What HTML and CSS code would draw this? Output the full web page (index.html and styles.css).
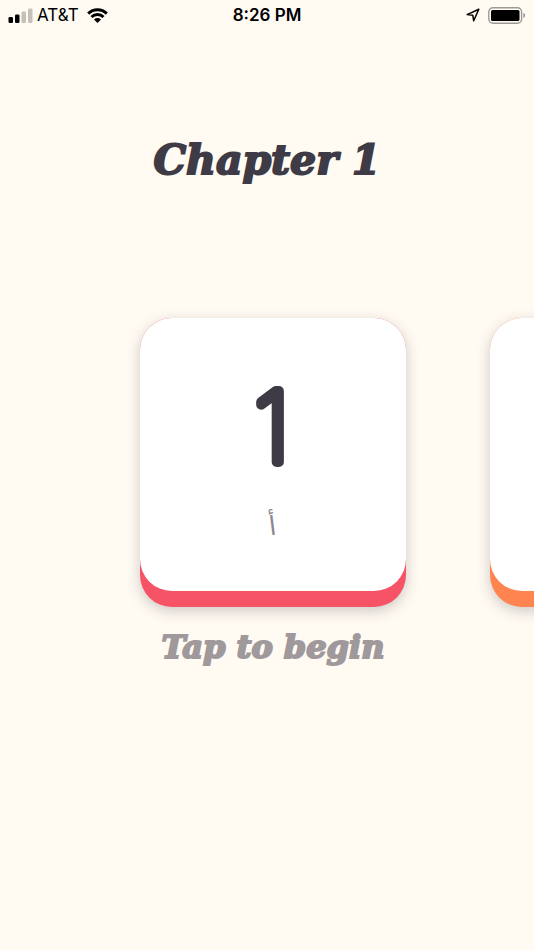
FILE: index.html
```html
<!DOCTYPE html>
<html lang="en">
<head>
    <meta charset="UTF-8">
    <meta name="viewport" content="width=device-width, initial-scale=1.0">
    <title>Chapter 1</title>
    <link rel="stylesheet" href="styles.css">
</head>
<body>
    <header class="status-bar">
        <div class="status-left">
            <svg class="signal" width="25" height="15" viewBox="0 0 25 15">
                <rect x="0.5" y="9" width="4.5" height="6" rx="1.3"/>
                <rect x="7" y="6.5" width="4.5" height="8.5" rx="1.3"/>
                <rect class="weak" x="13.5" y="3.5" width="4.5" height="11.5" rx="1.3"/>
                <rect class="weak" x="20" y="0.5" width="4.5" height="14.5" rx="1.3"/>
            </svg>
            <span class="carrier">AT&amp;T</span>
            <svg class="wifi" width="21" height="15" viewBox="0 0 21 15">
                <path d="M1.2 5.6a13.2 13.2 0 0 1 18.6 0M4.5 9a8.5 8.5 0 0 1 12 0"/>
                <path class="dot" d="M7 11.4a5 5 0 0 1 7 0L10.5 15z"/>
            </svg>
        </div>
        <time class="clock">8:26 PM</time>
        <div class="status-right">
            <svg class="location" width="14" height="14" viewBox="0 0 14 14">
                <path d="M12.8 1.2 1.2 6.6l5.6.7.9 5.5z"/>
            </svg>
            <svg class="battery" width="38" height="17" viewBox="0 0 38 17">
                <rect class="shell" x="0.8" y="0.8" width="32.8" height="15.4" rx="4.2"/>
                <rect x="3" y="3" width="28.5" height="11" rx="1.6"/>
                <path class="tip" d="M35.3 5.8c2.4.8 2.4 4.6 0 5.4z"/>
            </svg>
        </div>
    </header>

    <main>
        <h1 class="title">Chapter 1</h1>

        <div class="carousel">
            <div class="slide">
                <button class="card card-red" id="lesson1" type="button">
                    <span class="card-face">
                        <svg class="number" width="120" height="140" viewBox="0 0 120 140">
                            <text x="59" y="104">1</text>
                        </svg>
                        <span class="arabic" lang="ar">أ</span>
                    </span>
                </button>
                <label class="hint" for="lesson1">Tap to begin</label>
            </div>
            <div class="slide">
                <button class="card card-orange" type="button" aria-label="2">
                    <span class="card-face"></span>
                </button>
            </div>
        </div>
    </main>
</body>
</html>
```
FILE: styles.css
```css
* { margin: 0; padding: 0; box-sizing: border-box; }
body {
    background: #fffaf2;
    color: #3e3a46;
    font-family: Inter, "Liberation Sans", sans-serif;
    min-height: 100vh;
    overflow-x: hidden;
}

/* Status bar */
.status-bar {
    display: grid;
    grid-template-columns: 1fr auto 1fr;
    align-items: center;
    height: 30px;
    padding: 0 8px;
    color: #000;
    font-size: 17px;
    line-height: 30px;
}
.status-left, .status-right {
    display: flex;
    align-items: center;
}
.status-left {
    gap: 4px;
}
.status-right {
    justify-content: flex-end;
    gap: 8px;
}
.carrier {
    margin-right: 4px;
}
.clock {
    font-weight: 600;
}
.weak {
    fill: #c5c1ba;
}
.wifi path {
    fill: none;
    stroke: #000;
    stroke-width: 3;
}
.wifi .dot {
    fill: #000;
    stroke: none;
}
.location path {
    fill: none;
    stroke: #000;
    stroke-width: 1.5;
    stroke-linejoin: round;
}
.battery .shell {
    fill: none;
    stroke: #9d9a95;
    stroke-width: 1.4;
}
.battery .tip {
    fill: #9d9a95;
}

/* Chapter */
.title, .hint {
    font-family: "DejaVu Serif", serif;
    font-style: italic;
    font-weight: 700;
    text-align: center;
    -webkit-text-stroke: 2px currentColor;
}
.title {
    margin-top: 102px;
    font-size: 41px;
    line-height: 56px;
}
.carousel {
    display: flex;
    gap: 84px;
    margin-top: 110px;
    padding: 20px 0 20px calc(50% - 127px);
    overflow: hidden;
}
.slide {
    flex: none;
    width: 266px;
    display: flex;
    flex-direction: column;
    gap: 16px;
}
.card {
    display: block;
    padding-bottom: 16px;
    border: none;
    border-radius: 32px;
    box-shadow: 0 4px 14px rgba(62, 58, 70, 0.25);
    color: inherit;
    font: inherit;
    cursor: pointer;
}
.card-red {
    background: #f75366;
}
.card-orange {
    background: #ff8450;
}
.card-face {
    display: flex;
    flex-direction: column;
    align-items: center;
    height: 273px;
    padding-top: 40px;
    border-radius: 32px;
    background: #fff;
}
.number text {
    fill: #3e3a46;
    stroke: #3e3a46;
    stroke-width: 10;
    stroke-linejoin: round;
    font-size: 97px;
    font-weight: 100;
    text-anchor: middle;
}
.arabic {
    margin-top: 8px;
    color: #8b898f;
    font-family: "DejaVu Sans", sans-serif;
    font-size: 26px;
    line-height: 40px;
    transform: rotate(-7deg);
}
.hint {
    color: #9f999c;
    font-size: 32px;
    line-height: 48px;
    white-space: nowrap;
}
```
